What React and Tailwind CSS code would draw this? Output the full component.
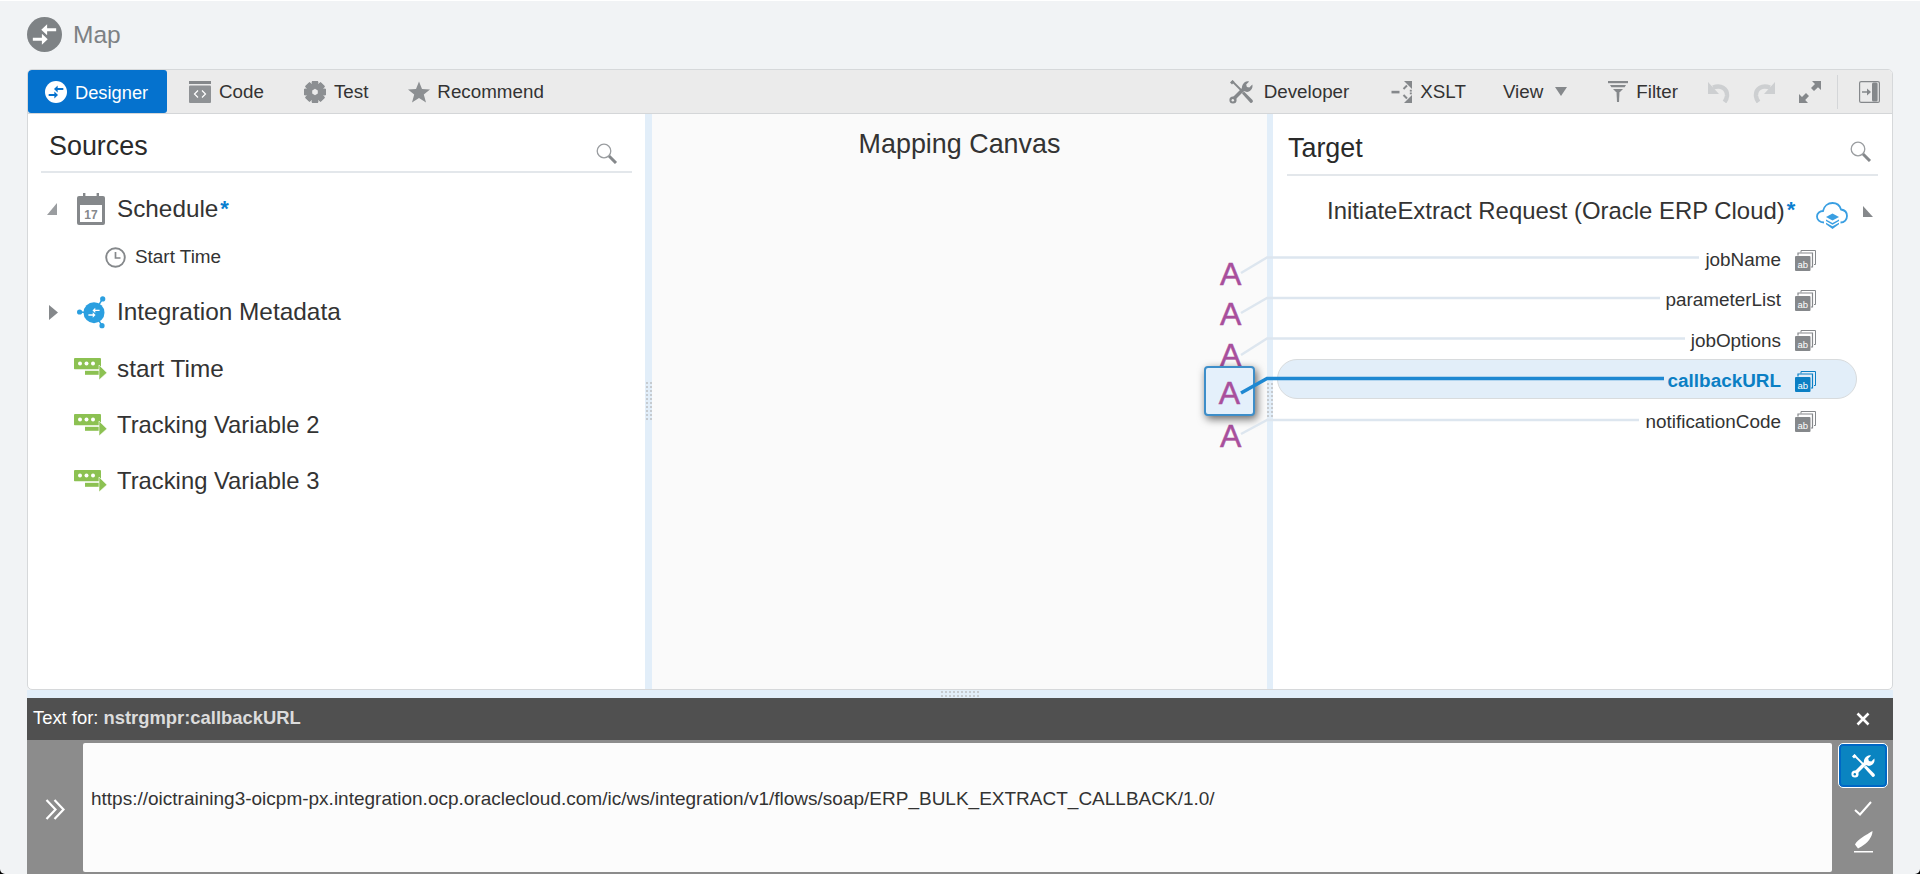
import React from "react";

const Arrows = ({ c }) => (
  <g fill={c} stroke="none">
    <path d="M13.8 7.700h6.200v2h-6.200v2.800L9.800 8.700 13.800 4.900z" />
    <path d="M10.200 14.300H4v2h6.200v2.800l4-3.800-4-3.800z" />
  </g>
);
const MapIcon = ({ size, bg, fg, className }) => (
  <svg width={size} height={size} viewBox="0 0 24 24" className={className}>
    <circle cx="12" cy="12" r="12" fill={bg} />
    <Arrows c={fg} />
  </svg>
);
const MetaIcon = () => (
  <svg width="30" height="33" viewBox="0 0 30 33" className="shrink-0">
    <g stroke="#2b9fe0" strokeWidth="1.5">
      <line x1="17" y1="16.7" x2="25.7" y2="2.7" />
      <line x1="17" y1="16.7" x2="2" y2="16" />
      <line x1="17" y1="16.7" x2="25" y2="29.7" />
    </g>
    <circle cx="25.7" cy="2.9" r="2.6" fill="#2b9fe0" />
    <circle cx="2.6" cy="16" r="2.6" fill="#2b9fe0" />
    <circle cx="25" cy="29.7" r="2.6" fill="#2b9fe0" />
    <circle cx="17" cy="16.7" r="10.5" fill="#2b9fe0" />
    <g transform="translate(8.6 8.3) scale(0.7)"><Arrows c="#fff" /></g>
  </svg>
);
const CodeIcon = () => (
  <svg width="22" height="22" viewBox="0 0 22 22" className="shrink-0">
    <rect x="0" y="0" width="22" height="3" fill="#85888b" />
    <rect x="0" y="4.5" width="22" height="17.5" rx="1" fill="#8f9295" />
    <path d="M9 9.5l-3.5 3.5 3.5 3.5M13 9.5l3.5 3.5-3.5 3.5" stroke="#fff" strokeWidth="1.2" fill="none" />
  </svg>
);
const GearIcon = () => {
  const teeth = [0, 45, 90, 135, 180, 225, 270, 315];
  return (
    <svg width="22" height="22" viewBox="0 0 22 22" className="shrink-0">
      {teeth.map((a) => (
        <rect key={a} x="7.8" y="0" width="6.4" height="22" rx="1" fill="#8c8f92" transform={`rotate(${a} 11 11)`} />
      ))}
      <circle cx="11" cy="11" r="8.2" fill="#8c8f92" />
      <polygon points="11,7.8 13.8,9.4 13.8,12.6 11,14.2 8.2,12.6 8.2,9.4" fill="#ebebeb" />
    </svg>
  );
};
const StarIcon = () => (
  <svg width="22" height="22" viewBox="0 0 22 22" className="shrink-0">
    <polygon points="11,0.5 14,8 22,8.4 15.8,13.4 18,21.5 11,17 4,21.5 6.2,13.4 0,8.4 8,8" fill="#8c8f92" />
  </svg>
);
const ToolsIcon = ({ size = 25, c = "#85888b", h = 25, hole = "#ebebeb" }) => (
  <svg width={size} height={h} viewBox="0 0 25 25" className="shrink-0">
    <path d="M3 2l11 11" stroke={c} strokeWidth="1.8" />
    <path d="M1 3.5l2.5-2.5 2 2-2.500 2.500z" fill={c} />
    <path d="M13 14.500l2-2 8.500 8.500a1.700 1.700 0 0 1-2.400 2.400z" fill={c} />
    <path d="M14 10.500l-9 9" stroke={c} strokeWidth="3.600" />
    <circle cx="4" cy="21" r="3.600" fill={c} />
    <circle cx="3.800" cy="21.200" r="1.200" fill={hole} />
    <path d="M13.500 11.500c-1.800-3.500.5-9 5.200-9.300l1.500.3-3 3 .7 2.400 2.400.7 3-3c1.300 4.300-3 8.500-7 7z" fill={c} />
  </svg>
);
const XsltIcon = () => (
  <svg width="21" height="22" viewBox="0 0 21 22" className="shrink-0" fill="#85888b">
    <rect x="0.500" y="9.800" width="8" height="2.600" />
    <polygon points="13,0 21,0 21,8" />
    <path d="M16 4.500l-3.500 3.500" stroke="#85888b" strokeWidth="2" />
    <rect x="18.800" y="8.800" width="2" height="1.800" />
    <polygon points="13,22 21,22 21,14" />
    <path d="M16 17.500l-3.500-3.500" stroke="#85888b" strokeWidth="2" />
    <rect x="18.800" y="11.500" width="2" height="1.800" />
  </svg>
);
const Caret = ({ className }) => (
  <svg width="12" height="9" viewBox="0 0 12 9" className={className}>
    <polygon points="0,0 12,0 6,9" fill="#85888b" />
  </svg>
);
const FilterIcon = () => (
  <svg width="20" height="21" viewBox="0 0 20 21" className="shrink-0" fill="#85888b">
    <rect x="0" y="0" width="20" height="2.200" />
    <polygon points="2,4 18,4 16.600,6.200 3.400,6.200" />
    <polygon points="5,8 15,8 12,11 8,11" />
    <polygon points="8.500,11 11.500,11 11,21 9,21" />
  </svg>
);
const UndoIcon = ({ flip }) => (
  <svg width="22" height="23" viewBox="0 0 22 23" className={flip ? "shrink-0 -scale-x-100" : "shrink-0"}>
    <polygon points="0,2 0,14 11,14" fill="#cdcfd1" />
    <path d="M5 7.500c8-3 14.500 1 14 8.500-.2 2-1 4-2.500 6" stroke="#cdcfd1" strokeWidth="4.400" fill="none" />
  </svg>
);
const ExpandIcon = () => (
  <svg width="22" height="22" viewBox="0 0 22 22" className="shrink-0" fill="#85888b">
    <polygon points="13,0 22,0 22,9 19,6.200 15,10 12,7 16,3" />
    <polygon points="0,13 0,22 9,22 6.200,19 10,15 7,12 3,16" />
  </svg>
);
const PanelIcon = () => (
  <svg width="21" height="22" viewBox="0 0 21 22" className="shrink-0">
    <rect x="0.600" y="0.600" width="19.800" height="20.800" rx="1.500" fill="none" stroke="#85888b" strokeWidth="1.200" />
    <rect x="13" y="1.500" width="5.600" height="19" rx="1.500" fill="#85888b" />
    <path d="M3 11h6.500" stroke="#85888b" strokeWidth="1.400" />
    <polygon points="8,7.500 12,11 8,14.500" fill="#85888b" />
  </svg>
);
const SearchIcon = () => (
  <svg width="22" height="21" viewBox="0 0 22 21" className="shrink-0">
    <circle cx="8" cy="8" r="6.800" fill="none" stroke="#9a9da0" strokeWidth="1.300" />
    <path d="M13 13l7 7" stroke="#85888b" strokeWidth="3" />
  </svg>
);
const CalendarIcon = () => (
  <svg width="28" height="32" viewBox="0 0 28 32" className="shrink-0">
    <rect x="0" y="3" width="28" height="29" rx="2" fill="#85888b" />
    <rect x="3" y="12" width="22" height="17" fill="#fff" />
    <rect x="6" y="0" width="2.400" height="6" fill="#85888b" />
    <rect x="19.600" y="0" width="2.400" height="6" fill="#85888b" />
    <text x="14" y="26" textAnchor="middle" fontSize="12" fontWeight="700" fill="#85888b" fontFamily="Liberation Sans">17</text>
  </svg>
);
const ClockIcon = () => (
  <svg width="21" height="21" viewBox="0 0 21 21" className="shrink-0">
    <circle cx="10.500" cy="10.500" r="9.300" fill="none" stroke="#85888b" strokeWidth="1.900" />
    <path d="M10.500 5v6h5" fill="none" stroke="#85888b" strokeWidth="1.700" />
  </svg>
);
const VarIcon = () => (
  <svg width="33" height="22" viewBox="0 0 33 22" className="shrink-0">
    <rect x="0" y="0" width="27" height="11.500" rx="1" fill="#8cc152" />
    <circle cx="6" cy="5.500" r="2" fill="#fff" />
    <circle cx="12.500" cy="5.500" r="2" fill="#fff" />
    <circle cx="19" cy="5.500" r="2" fill="#fff" />
    <rect x="0" y="11.500" width="27" height="1.500" fill="#fff" />
    <rect x="11" y="12.800" width="15" height="4" fill="#8cc152" />
    <polygon points="25,7 33,14.800 25,22" fill="#8cc152" stroke="#fff" strokeWidth="0.600" />
  </svg>
);
const CloudIcon = () => (
  <svg width="32" height="27" viewBox="0 0 32 27" className="shrink-0">
    <path d="M8 20.500C3.500 20.500 1 17.500 1 14.500 1 11 4 9 7 9 8 4 12 1 16.500 1 21 1 24 4 25 7.500 28.500 8 31 10.500 31 14 31 17.500 28.500 20.500 24.500 20.500" fill="none" stroke="#3a9fe2" strokeWidth="1.800" />
    <polygon points="16.500,11.500 23,15 16.500,18.500 10,15" fill="#3a9fe2" />
    <polygon points="10,17.500 16.500,21 23,17.500 23,19 16.500,22.800 10,19" fill="#3a9fe2" />
    <polygon points="10,20.800 16.500,24.300 23,20.800 23,22.300 16.500,27 10,22.300" fill="#3a9fe2" />
  </svg>
);
const AbIcon = ({ c = "#85888b" }) => (
  <svg width="21" height="21" viewBox="0 0 21 21" className="shrink-0">
    <path d="M6 2.500V.500h14.500v14h-1.500" fill="none" stroke={c} strokeWidth="1" />
    <path d="M3 5.500V3h14.500v14H16" fill="none" stroke={c} strokeWidth="1.200" />
    <rect x="0" y="6" width="15.500" height="15" rx="1" fill={c} />
    <text x="7.700" y="17.500" textAnchor="middle" fontSize="9.500" fill="#fff" fontFamily="Liberation Sans">ab</text>
  </svg>
);
const TriRight = () => (
  <svg width="9" height="15" viewBox="0 0 9 15" className="shrink-0">
    <polygon points="0,0 9,7.500 0,15" fill="#85888b" />
  </svg>
);
const TriCorner = () => (
  <svg width="10" height="11" viewBox="0 0 10 11" className="shrink-0">
    <polygon points="0,0 10,11 0,11" fill="#85888b" />
  </svg>
);
const TriCornerL = () => (
  <svg width="10" height="12" viewBox="0 0 10 12" className="shrink-0">
    <polygon points="10,0 10,12 0,12" fill="#9a9da0" />
  </svg>
);
const Grip = ({ n, className }) => (
  <div className={className}>
    {Array.from({ length: n }).map((_, i) => (
      <div key={i} className="w-[2px] h-[2px] bg-[#c6cbd0]" />
    ))}
  </div>
);

const Tool = ({ className, icon, label }) => (
  <div className={"flex items-center gap-2 " + (className || "")}>
    {icon}
    <span className="pt-[2px]">{label}</span>
  </div>
);

const aLetters = ["top-[144px]", "top-[184px]", "top-[225px]", "top-[306px]"];

const Row = ({ label }) => (
  <div className="flex items-center justify-end h-[40.4px] gap-[14px] pr-[76px] text-[18.9px] text-[#333]">
    <span>{label}</span>
    <AbIcon />
  </div>
);

const SourceRow = ({ icon, label, star, className }) => (
  <div className={"flex items-center " + (className || "")}>
    {icon}
    <span>{label}</span>
    {star}
  </div>
);

const Star = () => <span className="text-[#0a7fd0] font-bold text-[22px] leading-none ml-[2px]">*</span>;

const aClass = "text-[32px] leading-none text-[#a84f9c] [-webkit-text-stroke:0.5px_#a84f9c]";

export default function App() {
  return (
    <div className="h-[874px] bg-black font-['Liberation_Sans',Arial,sans-serif] overflow-hidden">
      <div className="h-[874px] bg-[#f1f3f5] rounded-b-[5px] overflow-hidden border-t border-t-white">
        <div className="h-[68px] pl-[27px] pt-[16px] flex items-start gap-[11px]">
          <MapIcon size={35} bg="#7e8285" fg="#fff" />
          <span className="text-[24.5px] leading-[35px] text-[#7d8184]">Map</span>
        </div>
        <div className="ml-[27px] w-[1866px] h-[805px] flex flex-col">
          <div className="border border-[#d6d8da] rounded-t-[5px] bg-white flex flex-col h-[621px] rounded-b-[5px] overflow-hidden">
            <div className="h-[44px] shrink-0 bg-[#ebebeb] border-b border-b-[#d4d6d8] flex items-center text-[18.8px] text-[#333]">
              <div className="h-[43px] w-[139px] bg-[#0572ce] rounded-[3px] text-white flex items-center pl-[17px] gap-2">
                <MapIcon size={22} bg="#fff" fg="#0572ce" />
                <span className="pt-[2px] text-[18.3px]">Designer</span>
              </div>
              <Tool className="ml-[22px]" icon={<CodeIcon />} label="Code" />
              <Tool className="ml-[40px]" icon={<GearIcon />} label="Test" />
              <Tool className="ml-[40px] !gap-[7px]" icon={<StarIcon />} label="Recommend" />
              <div className="ml-auto flex items-center">
                <Tool className="!gap-[10px]" icon={<ToolsIcon />} label="Developer" />
                <Tool className="ml-[42px]" icon={<XsltIcon />} label="XSLT" />
                <span className="ml-[37px] pt-[2px]">View</span>
                <Caret className="ml-[12px]" />
                <Tool className="ml-[41px]" icon={<FilterIcon />} label="Filter" />
                <div className="ml-[30px]"><UndoIcon /></div>
                <div className="ml-[23px]"><UndoIcon flip /></div>
                <div className="ml-[24px]"><ExpandIcon /></div>
                <div className="ml-[16px] w-px h-[34px] bg-[#d4d6d8]" />
                <div className="ml-[21px] mr-[12px]"><PanelIcon /></div>
              </div>
            </div>

            <div className="relative flex flex-1 min-h-0">
              {/* Sources */}
              <div className="w-[617px] shrink-0 pl-[13px] pr-[13px] text-[#333]">
                <div className="h-[59px] border-b-2 border-b-[#e3e7eb] flex items-center justify-between pl-[8px] pr-[14px]">
                  <span className="text-[26.9px] leading-none text-[#2a2a2a] mt-[7px]">Sources</span>
                  <div className="mt-[21px]"><SearchIcon /></div>
                </div>
                <div className="-ml-[13px]">
                  <div className="h-[18px]" />
                  <SourceRow
                    className="h-[36px] pl-[19px] text-[24.3px]"
                    icon={<span className="flex items-center"><TriCornerL /><span className="w-[20px]" /><CalendarIcon /><span className="w-[12px]" /></span>}
                    label="Schedule"
                    star={<Star />}
                  />
                  <SourceRow
                    className="h-[36px] mt-[12px] pl-[77px] text-[18.9px] gap-[9px]"
                    icon={<ClockIcon />}
                    label="Start Time"
                  />
                  <SourceRow
                    className="h-[36px] mt-[19px] pl-[21px] text-[24.4px]"
                    icon={<span className="flex items-center"><TriRight /><span className="w-[19px]" /><MetaIcon /><span className="w-[10px]" /></span>}
                    label="Integration Metadata"
                  />
                  <SourceRow className="h-[56px] mt-[11px] pl-[46px] text-[24.3px] gap-[10px]" icon={<VarIcon />} label="start Time" />
                  <SourceRow className="h-[56px] pl-[46px] text-[23.8px] gap-[10px]" icon={<VarIcon />} label="Tracking Variable 2" />
                  <SourceRow className="h-[56px] pl-[46px] text-[23.8px] gap-[10px]" icon={<VarIcon />} label="Tracking Variable 3" />
                </div>
              </div>

              {/* Splitter */}
              <div className="w-[7px] shrink-0 bg-[#e2eef9] flex flex-col justify-start pt-[268px] items-center">
                <Grip n={20} className="grid grid-cols-2 gap-[2px] w-[6px]" />
              </div>

              {/* Canvas */}
              <div className="relative w-[615px] shrink-0 bg-[#fafafa]">
                <div className="text-center text-[26.9px] leading-none text-[#333] pt-[17px]">Mapping Canvas</div>
                {aLetters.map((t, i) => (
                  <span key={i} className={"absolute left-[568px] " + aClass + " " + t}>A</span>
                ))}
                <div className="absolute left-[552px] top-[252px] w-[51px] h-[50px] bg-[#e4f0fb] border-2 border-[#3d8ec9] rounded-[4px] shadow-[2px_3px_8px_rgba(0,0,0,0.6)] flex items-center justify-center">
                  <span className={aClass + " pt-[3px]"}>A</span>
                </div>
              </div>

              {/* Splitter */}
              <div className="w-[6px] shrink-0 bg-[#e2eef9] flex flex-col pt-[269px]">
                <Grip n={20} className="grid grid-cols-2 gap-[2px] w-[6px]" />
              </div>

              {/* Target */}
              <div className="flex-1 min-w-0 text-[#333]">
                <div className="ml-[14px] mr-[14px] h-[62px] border-b-2 border-b-[#e3e7eb] flex items-center justify-between pl-[1px] pr-[6px]">
                  <span className="text-[26.9px] leading-none text-[#2a2a2a] mt-[8px]">Target</span>
                  <div className="mt-[14px]"><SearchIcon /></div>
                </div>
                <div className="h-[64px] flex items-center pl-[54px]">
                  <span className="text-[23.9px] mt-[6px]">InitiateExtract Request (Oracle ERP Cloud)</span>
                  <span className="mt-[6px]"><Star /></span>
                  <span className="ml-[21px] mt-[15px]"><CloudIcon /></span>
                  <span className="ml-[15px] mt-[6px]"><TriCorner /></span>
                </div>
                <Row label="jobName" />
                <Row label="parameterList" />
                <Row label="jobOptions" />
                <div className="relative flex items-center justify-end h-[40.4px] gap-[14px] pr-[76px] text-[18.9px]">
                  <div className="absolute left-[4px] top-[-2px] w-[580px] h-[40px] rounded-full bg-[#e2eef9] border border-[#d8dbdd]" />
                  <span className="relative font-bold text-[#0b7fc4]">callbackURL</span>
                  <span className="relative flex"><AbIcon c="#0b7fc4" /></span>
                </div>
                <Row label="notificationCode" />
              </div>

              {/* Mapping lines */}
              <svg className="absolute inset-0 pointer-events-none" width="1864" height="576" viewBox="28 114 1864 576">
                <g fill="none" stroke="#dde6ef" strokeWidth="2.5">
                  <polyline points="1241,273 1267,257.5 1699,257.5" />
                  <polyline points="1241,313 1267,298 1660,298" />
                  <polyline points="1241,355 1267,338.5 1685,338.5" />
                  <polyline points="1241,434 1267,420 1639,420" />
                </g>
                <polyline points="1241,393 1267,378.5 1664,378.5" fill="none" stroke="#1e88d2" strokeWidth="3.5" />
              </svg>
            </div>
          </div>

          <div className="h-[8px] shrink-0 bg-[#e2eef9] flex items-center justify-center">
            <Grip n={20} className="grid grid-cols-10 gap-[2px] w-[38px]" />
          </div>
          <div className="h-[42px] shrink-0 bg-[#505050] flex items-center justify-between pl-[6px] pr-[23px] text-[18.4px]">
            <span className="text-white pb-[2px]">
              Text for: <span className="text-[#dcdcdc] font-bold">nstrgmpr:callbackURL</span>
            </span>
            <svg width="14" height="14" viewBox="0 0 14 14">
              <path d="M1.5 1.5l11 11M12.5 1.5l-11 11" stroke="#fff" strokeWidth="2.6" />
            </svg>
          </div>
          <div className="flex-1 min-h-0 bg-[#8c8c8c] flex pt-[3px] pb-[2px]">
            <div className="w-[56px] shrink-0 flex items-center justify-center">
              <svg width="20" height="21" viewBox="0 0 20 21" className="mt-[3px]">
                <path d="M1.5 1l9 9.5-9 9.5M9.5 1l9 9.5-9 9.5" fill="none" stroke="#fff" strokeWidth="2.2" />
              </svg>
            </div>
            <div className="w-[1749px] shrink-0 bg-[#fcfcfc] rounded-[2px] flex items-center pl-[8px] text-[19px] text-[#333] pb-[17px]">
              https://oictraining3-oicpm-px.integration.ocp.oraclecloud.com/ic/ws/integration/v1/flows/soap/ERP_BULK_EXTRACT_CALLBACK/1.0/
            </div>
            <div className="ml-[6px] w-[50px] flex flex-col items-center">
              <div className="w-[50px] h-[45px] rounded-[5px] border border-white bg-[#0a84c1] shadow-[inset_0_0_0_2px_#0067c5] flex items-center justify-center">
                <ToolsIcon size={25} h={25} c="#fff" hole="#0a84c1" />
              </div>
              <svg width="18" height="15" viewBox="0 0 18 15" className="mt-[13px]">
                <path d="M1 9l5 4.5L17 1" fill="none" stroke="#fff" strokeWidth="2" />
              </svg>
              <svg width="19" height="22" viewBox="0 0 19 22" className="mt-[15px]">
                <path d="M1 13.5C3 9 12 4 18.5 0c0 6-5 12-11 15.5L4 17.5z" fill="#fff" />
                <rect x="0" y="20" width="19" height="1.5" fill="#fff" />
              </svg>
            </div>
          </div>
        </div>
      </div>
    </div>
  );
}
